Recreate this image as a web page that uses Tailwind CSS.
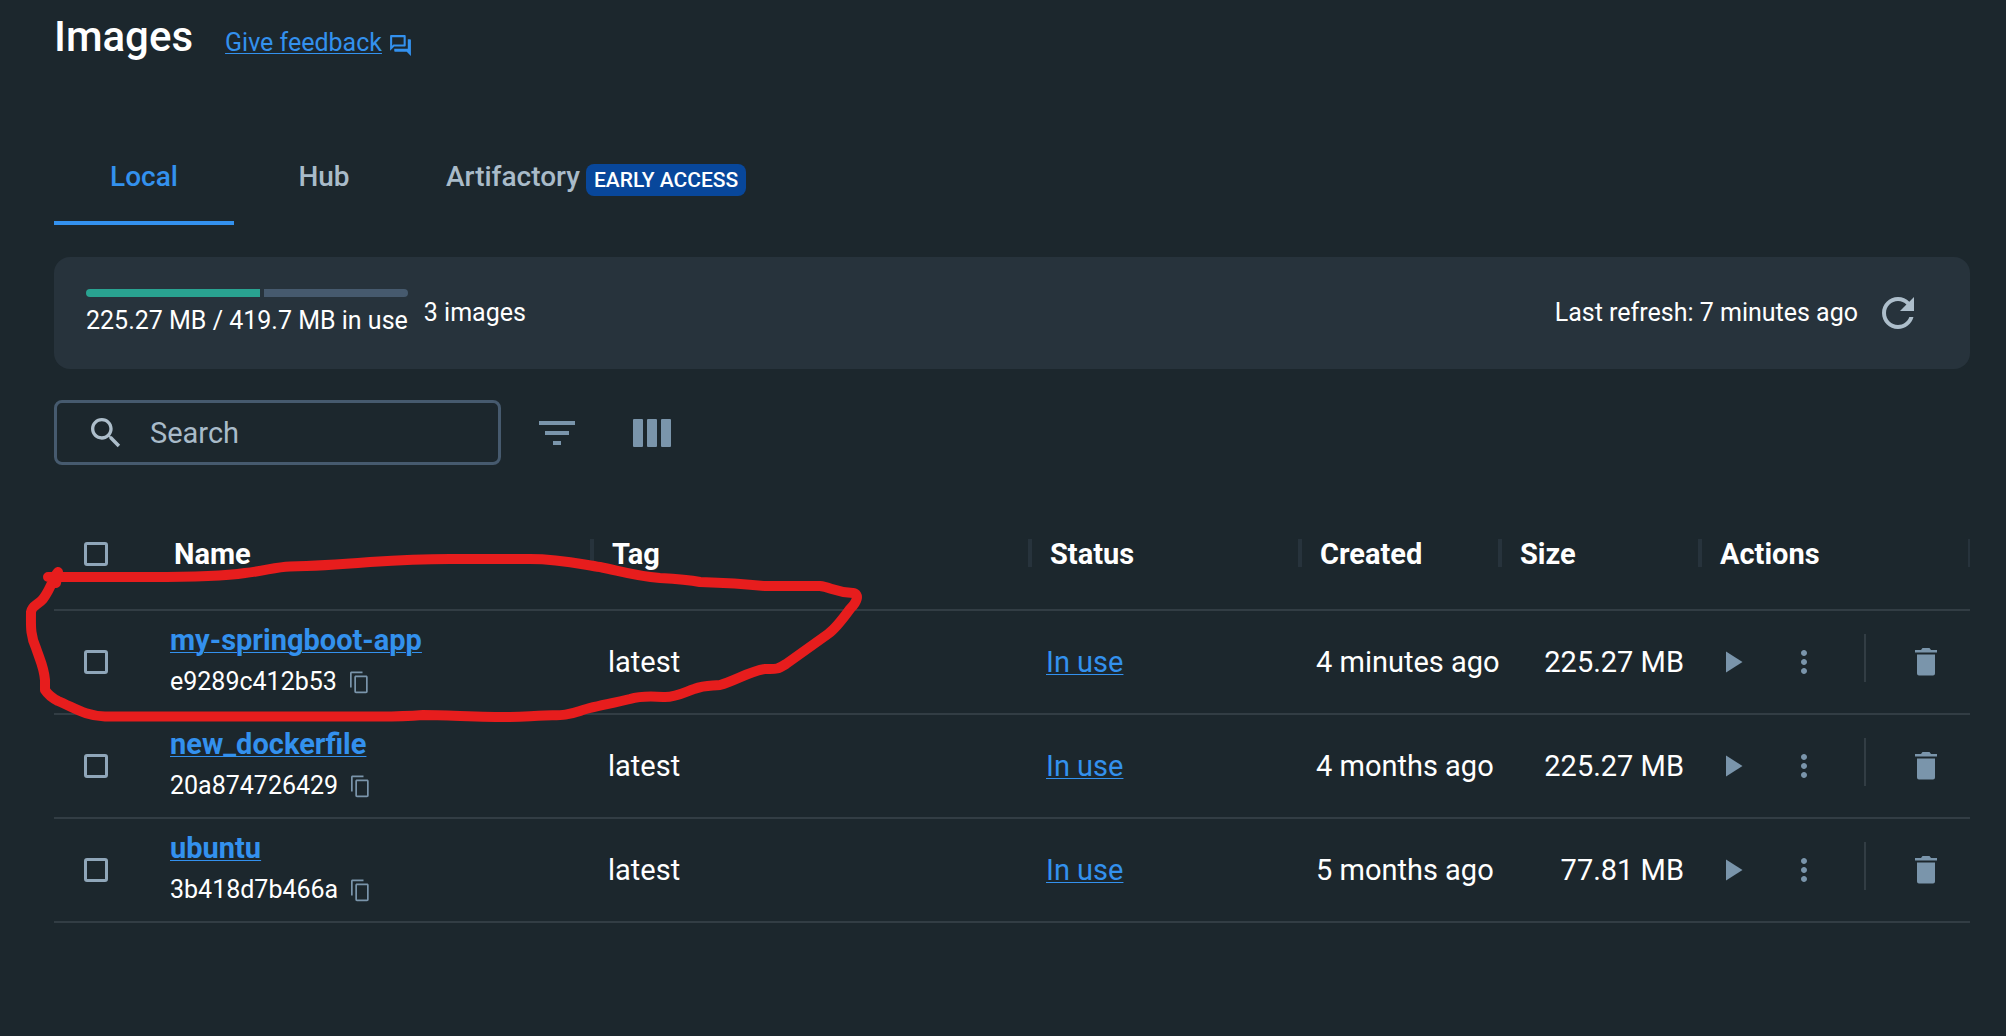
<!DOCTYPE html>
<html lang="en">
<head>
<meta charset="utf-8">
<title>Images</title>
<script src="https://cdn.jsdelivr.net/npm/@tailwindcss/browser@4"></script>
</head>
<body class="min-h-screen bg-[#1c272d] font-[Roboto,sans-serif] text-white">
<svg class="hidden">
  <symbol id="copy" viewBox="0 0 24 24"><path d="M15.500 1.500H4.500c-.8 0-1.500.7-1.500 1.500v14.500h1.700V3.200h10.800zM19 5.500H9c-1 0-1.700.7-1.700 1.700v14.300c0 1 .7 1.700 1.700 1.700h10c1 0 1.700-.7 1.700-1.700V7.200c0-1-.7-1.700-1.700-1.700zm0 16H9V7.200h10z"/></symbol>
  <symbol id="play" viewBox="0 0 24 24"><path d="M8 5v14l11-7z"/></symbol>
  <symbol id="more" viewBox="0 0 24 24"><path d="M12 8c1.100 0 2-.9 2-2s-.9-2-2-2-2 .9-2 2 .9 2 2 2zm0 2c-1.100 0-2 .9-2 2s.9 2 2 2 2-.9 2-2-.9-2-2-2zm0 6c-1.100 0-2 .9-2 2s.9 2 2 2 2-.9 2-2-.9-2-2-2z"/></symbol>
  <symbol id="trash" viewBox="0 0 24 30"><path d="M3 7.500h18v19a2 2 0 0 1-2 2H5a2 2 0 0 1-2-2zM1 3h6l1.500-2h7L17 3h6v2.500H1z"/></symbol>
</svg>
<main class="relative pl-[54px] pr-9">
  <header class="flex h-[84px] items-baseline pt-3">
    <h1 class="text-[42px] leading-[50px] font-medium">Images</h1>
    <a href="#" class="ml-8 flex items-center gap-1.5 text-[25px] leading-8 text-[#3391ee]"><span class="underline decoration-1 underline-offset-2">Give feedback</span>
      <svg class="mt-1 size-[25px] fill-current" viewBox="0 0 24 24"><path d="M15 4v7H5.170L4 12.170V4h11m1-2H3c-.55 0-1 .45-1 1v14l4-4h10c.55 0 1-.45 1-1V3c0-.55-.45-1-1-1zm5 4h-2v9H6v2c0 .55.45 1 1 1h11l4 4V7c0-.55-.45-1-1-1z"/></svg></a>
  </header>
  <nav class="mt-[45px] flex h-24 text-[28px] leading-8 font-medium text-[#a9bbc9]">
    <a href="#" class="w-[180px] border-b-4 border-[#3391ee] pt-8 text-center text-[#3391ee]">Local</a>
    <a href="#" class="w-[180px] pt-8 text-center">Hub</a>
    <a href="#" class="flex items-start gap-1.5 px-8 pt-8">Artifactory <span class="mt-[3px] rounded-lg bg-[#08479b] px-2 text-[21px] leading-8 text-white">EARLY ACCESS</span></a>
  </nav>
  <section class="mt-8 flex h-28 items-center rounded-2xl bg-[#27333c] px-8 text-[25px]">
    <div>
      <div class="flex gap-1"><span class="h-2 rounded-l-full bg-[#29a391]" style="width:54%"></span><span class="h-2 grow rounded-r-full bg-[#465a6e]"></span></div>
      <p class="mt-2 leading-8">225.27 MB / 419.7 MB in use</p>
    </div>
    <p class="ml-4">3 images</p>
    <p class="ml-auto">Last refresh: 7 minutes ago</p>
    <button aria-label="Refresh" class="mr-4 ml-4"><svg class="size-12 fill-[#adbecb]" viewBox="0 0 24 24"><path d="M17.650 6.350C16.200 4.900 14.210 4 12 4c-4.420 0-7.990 3.580-7.990 8s3.570 8 7.990 8c3.730 0 6.840-2.550 7.730-6h-2.080c-.82 2.330-3.040 4-5.650 4-3.310 0-6-2.690-6-6s2.690-6 6-6c1.660 0 3.140.69 4.220 1.780L13 11h7V4l-2.350 2.350z"/></svg></button>
  </section>
  <div class="mt-[31px] flex items-center">
    <label class="flex h-[65px] w-[447px] items-center rounded-lg border-3 border-[#465a6e] pr-7 pl-[29px]">
      <svg class="size-10 shrink-0 fill-[#adbecb]" viewBox="0 0 24 24"><path d="M15.500 14h-.79l-.28-.27C15.410 12.590 16 11.110 16 9.500 16 5.910 13.090 3 9.500 3S3 5.910 3 9.500 5.910 16 9.500 16c1.610 0 3.090-.59 4.230-1.570l.27.28v.79l5 4.990L20.490 19l-4.990-5zm-6 0C7.010 14 5 11.990 5 9.500S7.010 5 9.500 5 14 7.010 14 9.500 11.990 14 9.500 14z"/></svg>
      <input type="text" placeholder="Search" aria-label="Search" class="ml-6 min-w-0 grow bg-transparent text-[29px] leading-8 outline-none placeholder:text-[#a9bbc9]">
    </label>
    <button aria-label="Filter" class="ml-8"><svg class="size-12 fill-[#7a95ab]" viewBox="0 0 24 24"><path d="M10 18h4v-2h-4v2zM3 6v2h18V6H3zm3 7h12v-2H6v2z"/></svg></button>
    <button aria-label="Columns" class="ml-12"><svg class="h-7 w-[46px] fill-[#7a95ab]" viewBox="0 0 46 28"><rect x="4" width="10" height="28" rx="1"/><rect x="18" width="10" height="28" rx="1"/><rect x="32" width="10" height="28" rx="1"/></svg></button>
  </div>
  <table class="mt-8 w-full table-fixed border-collapse text-left text-[29px] leading-8 whitespace-nowrap">
    <colgroup><col class="w-[100px]"><col><col><col class="w-[270px]"><col class="w-[200px]"><col class="w-[200px]"><col class="w-[270px]"></colgroup>
    <thead>
      <tr class="h-[113px] border-b-2 border-[#323d44] *:relative *:px-5 *:pt-0.5">
        <th><input type="checkbox" aria-label="Select all images" class="ml-[10px] block size-6 appearance-none rounded-[3px] border-3 border-[#8fa6b9]"></th>
        <th>Name<i class="absolute top-[42px] -right-0.5 h-7 w-1 bg-[#27333c]"></i></th>
        <th>Tag<i class="absolute top-[42px] -right-0.5 h-7 w-1 bg-[#27333c]"></i></th>
        <th>Status<i class="absolute top-[42px] -right-0.5 h-7 w-1 bg-[#27333c]"></i></th>
        <th>Created<i class="absolute top-[42px] -right-0.5 h-7 w-1 bg-[#27333c]"></i></th>
        <th>Size<i class="absolute top-[42px] -right-0.5 h-7 w-1 bg-[#27333c]"></i></th>
        <th>Actions<i class="absolute top-[42px] right-0 h-7 w-0.5 bg-[#27333c]"></i></th>
      </tr>
    </thead>
    <tbody>
      <tr class="h-[104px] border-b-2 border-[#323d44] *:px-4">
        <td><input type="checkbox" aria-label="Select my-springboot-app" class="ml-[14px] block size-6 appearance-none rounded-[3px] border-3 border-[#8fa6b9]"></td>
        <td><a href="#" class="block font-bold text-[#3391ee] underline decoration-1 underline-offset-2">my-springboot-app</a><div class="mt-2 flex h-9 items-center gap-2.5 text-[25px]">e9289c412b53<button aria-label="Copy ID"><svg class="size-6 fill-[#7a95ab]"><use href="#copy"/></svg></button></div></td>
        <td>latest</td>
        <td><a href="#" class="text-[#3391ee] underline decoration-1 underline-offset-2">In use</a></td>
        <td>4 minutes ago</td>
        <td class="text-right">225.27 MB</td>
        <td><div class="-ml-0.5 flex items-center"><button aria-label="Run"><svg class="size-9 fill-[#7a95ab]"><use href="#play"/></svg></button><button aria-label="More" class="ml-9"><svg class="size-9 fill-[#7a95ab]"><use href="#more"/></svg></button><i class="mb-2 ml-[42px] h-12 w-0.5 bg-[#323d44]"></i><button aria-label="Delete" class="ml-12"><svg class="h-[30px] w-6 fill-[#7a95ab]"><use href="#trash"/></svg></button></div></td>
      </tr>
      <tr class="h-[104px] border-b-2 border-[#323d44] *:px-4">
        <td><input type="checkbox" aria-label="Select new_dockerfile" class="ml-[14px] block size-6 appearance-none rounded-[3px] border-3 border-[#8fa6b9]"></td>
        <td><a href="#" class="block font-bold text-[#3391ee] underline decoration-1 underline-offset-2">new_dockerfile</a><div class="mt-2 flex h-9 items-center gap-2.5 text-[25px]">20a874726429<button aria-label="Copy ID"><svg class="size-6 fill-[#7a95ab]"><use href="#copy"/></svg></button></div></td>
        <td>latest</td>
        <td><a href="#" class="text-[#3391ee] underline decoration-1 underline-offset-2">In use</a></td>
        <td>4 months ago</td>
        <td class="text-right">225.27 MB</td>
        <td><div class="-ml-0.5 flex items-center"><button aria-label="Run"><svg class="size-9 fill-[#7a95ab]"><use href="#play"/></svg></button><button aria-label="More" class="ml-9"><svg class="size-9 fill-[#7a95ab]"><use href="#more"/></svg></button><i class="mb-2 ml-[42px] h-12 w-0.5 bg-[#323d44]"></i><button aria-label="Delete" class="ml-12"><svg class="h-[30px] w-6 fill-[#7a95ab]"><use href="#trash"/></svg></button></div></td>
      </tr>
      <tr class="h-[104px] border-b-2 border-[#323d44] *:px-4">
        <td><input type="checkbox" aria-label="Select ubuntu" class="ml-[14px] block size-6 appearance-none rounded-[3px] border-3 border-[#8fa6b9]"></td>
        <td><a href="#" class="block font-bold text-[#3391ee] underline decoration-1 underline-offset-2">ubuntu</a><div class="mt-2 flex h-9 items-center gap-2.5 text-[25px]">3b418d7b466a<button aria-label="Copy ID"><svg class="size-6 fill-[#7a95ab]"><use href="#copy"/></svg></button></div></td>
        <td>latest</td>
        <td><a href="#" class="text-[#3391ee] underline decoration-1 underline-offset-2">In use</a></td>
        <td>5 months ago</td>
        <td class="text-right">77.81 MB</td>
        <td><div class="-ml-0.5 flex items-center"><button aria-label="Run"><svg class="size-9 fill-[#7a95ab]"><use href="#play"/></svg></button><button aria-label="More" class="ml-9"><svg class="size-9 fill-[#7a95ab]"><use href="#more"/></svg></button><i class="mb-2 ml-[42px] h-12 w-0.5 bg-[#323d44]"></i><button aria-label="Delete" class="ml-12"><svg class="h-[30px] w-6 fill-[#7a95ab]"><use href="#trash"/></svg></button></div></td>
      </tr>
    </tbody>
  </table>
  <!-- freehand marker loop round the first image -->
  <svg class="pointer-events-none absolute top-[540px] left-0 h-[200px] w-[880px]" viewBox="0 540 880 200" fill="none" stroke="#e71d1d" stroke-width="10" stroke-linecap="round" stroke-linejoin="round"><path d="M48 577H150C200 577 225 576 245 573C265 571 275 567 290 566.500C320 566 345 564 370 562C400 560 420 559 450 559H530C560 559 580 564 600 567C620 571 635 576 660 578C680 579 690 580 700 582C730 583 745 584 765 586H820C830 587 835 592 853 593C860 594 857 602 850 609C842 620 835 629 828 634L786 664C777 670 775 669 765 669C750 671 735 681 720 685C710 686 705 685 694 689C685 692 675 698 663 697C650 696 640 696 630 699C610 704 590 707 580 711C565 716 560 715 545 715.500C530 716 525 717 510 717C480 717 445 715 423 715C410 716 395 716.500 380 716.500H105C85 716 75 708 58 701C52 698 47 693 45 690V680C44 667 40 660 36 648C30 635 31 625 31 612C32 605 38 605 43 599C49 591 52 583 55 576L58 572L56 583L50 577"/></svg>
</main>
</body>
</html>
